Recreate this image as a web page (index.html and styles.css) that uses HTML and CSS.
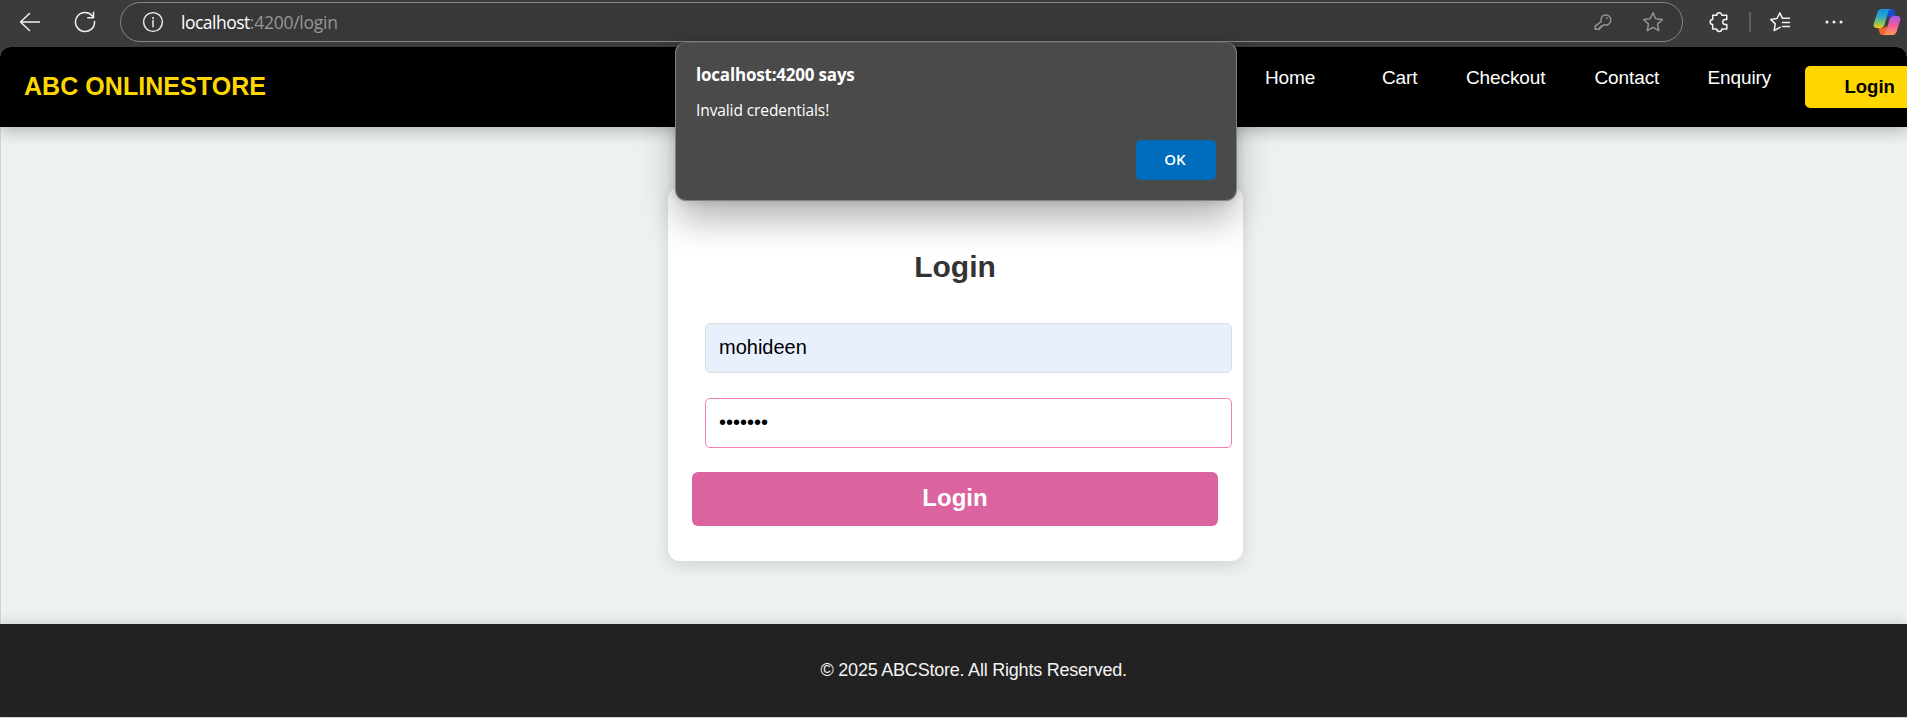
FILE: index.html
```html
<!DOCTYPE html>
<html lang="en">
<head>
<meta charset="utf-8">
<title>ABC OnlineStore</title>
<link rel="stylesheet" href="styles.css">
</head>
<body>
<div class="toolbar">
  <svg class="icon back" width="22" height="22" viewBox="0 0 22 22"><path d="M20.5 11H1.5M10.5 2.5L1.5 11l9 8.5"/></svg>
  <svg class="icon reload" width="22" height="22" viewBox="0 0 22 22"><path d="M20.5 10.5a9.5 9.5 0 1 1-2.4-5.8l1.4 1.5M19.5 1.2v5.6h-5.8"/></svg>
  <div class="address">
    <svg class="icon info" width="22" height="22" viewBox="0 0 22 22"><circle cx="11" cy="11" r="9.4"/><path d="M11 9.5v6.3"/><path class="dot" d="M11 6v2"/></svg>
    <span class="url"><span class="host">localhost</span><span class="path">:4200/login</span></span>
    <svg class="icon key" width="18" height="18" viewBox="0 0 18 18"><path d="M7.1 8.6a5 5 0 1 1 3 3.1L8.9 12.8H7.3v1.7H5.6v1.8H1.2v-3.1zM12.8 4.9h.6"/></svg>
    <svg class="icon star" width="22" height="22" viewBox="0 0 22 22"><path d="M11 1.8l2.8 6 6.5.8-4.8 4.5 1.3 6.6-5.8-3.3-5.8 3.3 1.3-6.6L1.7 8.6l6.5-.8z"/></svg>
  </div>
  <svg class="icon puzzle" width="20" height="22" viewBox="0 0 20 22"><path d="M3.7 4.3h4.1a2.5 2.5 0 0 1 5 0h5v4.2h-1.5a2.5 2.5 0 0 0 0 5h1.5v4.6h-5a2.5 2.5 0 0 1-5 0H3.7v-4.6a2.5 2.5 0 0 1 0-5V4.3z"/></svg>
  <span class="divider"></span>
  <svg class="icon favorites" width="22" height="22" viewBox="0 0 22 22"><path d="M20.5 7.3h-7L10.8 1.8 8 7.5l-6.300.9 4.600 4.500-1.200 6.600 6-3.200M13.500 11.500h7M13.500 15.500h7"/></svg>
  <svg class="more" width="18" height="6" viewBox="0 0 18 6"><circle cx="2" cy="3" r="1.5"/><circle cx="9" cy="3" r="1.5"/><circle cx="16" cy="3" r="1.5"/></svg>
  <svg class="copilot" width="28" height="28" viewBox="0 0 28 28">
    <defs>
      <linearGradient id="cool" x1="0" y1="0" x2="0" y2="1"><stop offset="0" stop-color="#1490df"/><stop offset=".4" stop-color="#2aa9c9"/><stop offset=".75" stop-color="#8cc45a"/><stop offset="1" stop-color="#f3cf18"/></linearGradient>
      <linearGradient id="warm" x1="0" y1="0" x2="0" y2="1"><stop offset="0" stop-color="#a85af0"/><stop offset=".5" stop-color="#ee5c9b"/><stop offset="1" stop-color="#ff9a52"/></linearGradient>
    </defs>
    <path fill="#174fd0" d="M13 1h5.500c1.800 0 2.500 1 3 2.700L22.800 8h-4c-2.300 0-3.200 1-4 3z"/>
    <path fill="#f4642f" d="M15 27H9.500c-1.800 0-2.500-1-3-2.700L5.200 20h4c2.300 0 3.200-1 4-3z"/>
    <path fill="url(#cool)" d="M8.500 1H18c-1.700.3-2.400 1.700-3 3.700l-3.500 11.800C10.600 19.200 9.400 20 7.300 20H4c-3.200 0-3.900-2.200-3-5L4.300 4.500C5 2.200 6.300 1 8.500 1z"/>
    <path fill="url(#warm)" d="M19.500 27H10c1.700-.3 2.400-1.700 3-3.700l3.500-11.800c.9-2.700 2.100-3.500 4.200-3.500H24c3.200 0 3.900 2.200 3 5l-3.300 10.500c-.7 2.300-2 3.500-4.200 3.500z"/>
  </svg>
</div>
<div class="page">
  <header class="header">
    <div class="brand">ABC ONLINESTORE</div>
    <nav class="nav">
      <a class="home">Home</a><a class="cart">Cart</a><a class="checkout">Checkout</a><a class="contact">Contact</a><a class="enquiry">Enquiry</a>
    </nav>
    <div class="header-login">Login</div>
  </header>
  <main class="main">
    <form class="card">
      <h2 class="title">Login</h2>
      <div class="field filled">mohideen</div>
      <div class="field focused">•••••••</div>
      <div class="submit">Login</div>
    </form>
  </main>
  <footer class="footer"><span class="copyright">© 2025 ABCStore. All Rights Reserved.</span></footer>
</div>
<div class="dialog">
  <div class="dialog-title">localhost:4200 says</div>
  <div class="dialog-text">Invalid credentials!</div>
  <div class="dialog-ok"><span>OK</span></div>
</div>
</body>
</html>
```
FILE: styles.css
```css
* { box-sizing: border-box; }
body { margin: 0; width: 1907px; height: 718px; overflow: hidden; background: #3b3b3b; font-family: "Liberation Sans", Arial, sans-serif; }
.toolbar { display: flex; align-items: center; height: 47px; padding: 0 0 3px 19px; }
.toolbar svg { flex: none; }
.icon { fill: none; stroke: #f2f2f2; stroke-width: 1.5; stroke-linejoin: round; stroke-linecap: round; }
.reload { margin-left: 33px; }
.address { display: flex; align-items: center; width: 1563px; height: 40px; margin-left: 24px; padding-left: 21px; border: 1px solid #858585; border-radius: 20px; background: #383838; flex: none; }
.info { stroke-width: 1.4; }
.info .dot { stroke-width: 1.5; stroke-linecap: butt; }
.url { width: 1412px; margin-left: 17px; font: 17.5px/24px "Open Sans", "Noto Sans", sans-serif; white-space: nowrap; flex: none; }
.host { color: #fff; letter-spacing: -0.5px; }
.path { color: #969696; letter-spacing: -0.25px; }
.key, .star { stroke: #929292; }
.key { margin-left: 1px; }
.star { margin-left: 30px; }
.puzzle { margin-left: 26px; }
.divider { width: 2px; height: 20px; margin-left: 20px; background: #606060; }
.favorites { margin-left: 18px; }
.more { margin-left: 34px; fill: #f2f2f2; }
.copilot { margin-left: 30px; }
.page { height: 671px; border-radius: 10px 10px 0 0; overflow: hidden; background: #ddd; }
.header { position: relative; display: flex; height: 80px; padding-left: 24px; background: #000; box-shadow: 0 4px 15px rgba(0,0,0,.25); }
.brand { width: 1241px; padding-top: 25px; color: #ffd700; font-size: 25px; line-height: 29px; font-weight: bold; white-space: nowrap; flex: none; letter-spacing: 0.05px; }
.nav { display: flex; width: 540px; padding-top: 20px; color: #fff; font-size: 19px; line-height: 22px; flex: none; letter-spacing: -0.1px; }
.nav a { flex: none; }
.home { width: 117px; }
.cart { width: 84px; }
.checkout { width: 128.500px; }
.contact { width: 113px; }
.header-login { width: 130px; height: 42px; margin-top: 19px; padding-left: 39.5px; border-radius: 5px 0 0 5px; background: #ffd700; color: #000; font-size: 18.5px; line-height: 41px; font-weight: bold; flex: none; }
.main { height: 497px; padding: 60px 0 0 667px; border-left: 1px solid #d0d3d4; background: #edf1f2; }
.card { width: 575px; height: 374px; padding: 62px 0 0 24px; border-radius: 12px; background: #fff; box-shadow: 0 4px 16px rgba(0,0,0,.13); }
.title { width: 526px; margin: 0 0 38px; color: #333; font-size: 30px; line-height: 36px; text-align: center; }
.field { width: 527px; height: 50px; margin: 0 0 25px 13px; padding-left: 13px; border: 1px solid #ddd; border-radius: 5px; font-size: 20px; line-height: 47px; color: #000; }
.filled { background: #e8f0fe; }
.focused { border-color: #f57cb6; line-height: 46px; }
.submit { width: 526px; height: 54px; margin-top: -1px; border-radius: 6px; background: #db64a0; color: #fff; font-size: 24px; line-height: 52px; font-weight: bold; text-align: center; }
.footer { position: relative; height: 93px; padding-left: 820.5px; background: #222; color: #f4f4f4; font-size: 18px; line-height: 92px; box-shadow: 0 -2px 12px rgba(0,0,0,.13); }
.copyright { letter-spacing: -0.22px; }
.dialog { position: absolute; left: 675px; top: 42px; width: 562px; height: 159px; padding: 19px 20px; border: 1px solid #828282; border-top-color: #606060; border-radius: 11px; background: #4a4a4a; box-shadow: 0 20px 36px -2px rgba(0,0,0,.3), 0 0 10px rgba(0,0,0,.14); color: #fff; font-family: "Open Sans", "Noto Sans", sans-serif; white-space: nowrap; }
.dialog-title { font-size: 17px; line-height: 26px; font-weight: 700; letter-spacing: -0.2px; }
.dialog-text { margin-top: 10px; font-size: 15.5px; line-height: 24px; letter-spacing: -0.1px; }
.dialog-ok { width: 80px; height: 40px; margin: 18px 0 0 440px; padding-right: 2px; border-radius: 5px; background: #006cbe; font-size: 15px; line-height: 39px; font-weight: 600; text-align: center; }
```
